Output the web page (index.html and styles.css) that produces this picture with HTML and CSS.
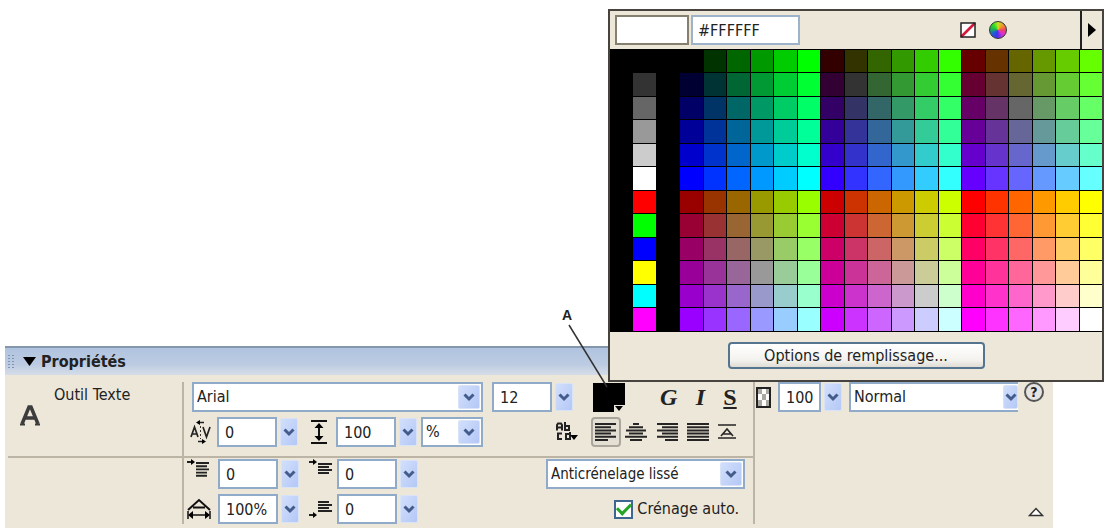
FILE: index.html
```html
<!DOCTYPE html>
<html lang="fr">
<head>
<meta charset="utf-8">
<title>Propriétés</title>
<link rel="stylesheet" href="styles.css">
</head>
<body>
<svg class="defs" width="0" height="0" aria-hidden="true">
  <symbol id="chev" viewBox="0 0 12 9"><path d="M1.5 1.5 6 6l4.500-4.500" fill="none" stroke="#435c8c" stroke-width="3"/></symbol>
</svg>
<main class="stage">
  <section class="panel" aria-label="Propriétés">
    <header class="panel-head">
      <span class="grip"></span>
      <svg width="13" height="9" viewBox="0 0 13 9" aria-hidden="true"><path d="M0 0h13L6.500 9z"/></svg>
      <h1>Propriétés</h1>
    </header>
    <div class="panel-body">
      <div class="tool">
        <svg width="20" height="22" viewBox="0 0 20 22" aria-hidden="true"><path d="M2 20 9 3h2l7 17M5 14h10" fill="none" stroke="#3c3c3c" stroke-width="3.500"/><path d="M0 20.500h5m10 0h5" stroke="#3c3c3c" stroke-width="2"/></svg>
        <span>Outil Texte</span>
      </div>
      <div class="tool-blank"></div>

      <div class="rows rows-top">
        <div class="row row-font">
          <div class="combo font"><select aria-label="Police"><option>Arial</option></select><span class="drop"><svg width="12" height="9"><use href="#chev"/></svg></span></div>
          <div class="field size"><input type="text" value="12" aria-label="Corps"><button class="drop" aria-label="Choisir le corps"><svg width="12" height="9"><use href="#chev"/></svg></button></div>
          <button class="swatch" aria-label="Couleur de remplissage"><svg width="32" height="29" viewBox="0 0 32 29"><path d="M0 0h32v29H0z"/><path d="M21 22h11v7H21z" fill="#ece6d8"/><path d="M22 23h8l-4 5z"/></svg></button>
          <div class="styles">
            <button class="bold" aria-label="Gras">G</button>
            <button class="italic" aria-label="Italique">I</button>
            <button class="under" aria-label="Souligné">S</button>
          </div>
        </div>
        <div class="row row-space">
          <svg class="ic" width="22" height="24" viewBox="0 0 22 24"><path d="M1 17 4.500 7 8 17M2 14h5M13 7l3.500 10L20 7" fill="none" stroke="#222" stroke-width="1.700"/><path d="M10.500 6v13" stroke="#333" stroke-dasharray="2 2"/><path d="M14 2.500H8M8 21.500h6" stroke="#222" stroke-width="1.300"/><path d="m6 2.500 4-2.500v5zM16 21.500l-4-2.500v5z"/></svg>
          <div class="field"><input type="text" value="0" aria-label="Crénage"><button class="drop" aria-label="Régler le crénage"><svg width="12" height="9"><use href="#chev"/></svg></button></div>
          <svg class="ic lead" width="18" height="24" viewBox="0 0 18 24"><path d="M1 1h16M1 23h16M9 5v14" stroke="#111" stroke-width="2"/><path d="m9 3 4.500 5h-9zM9 21l4.500-5h-9z"/></svg>
          <div class="field"><input type="text" value="100" aria-label="Interlignage"><button class="drop" aria-label="Régler l'interlignage"><svg width="12" height="9"><use href="#chev"/></svg></button></div>
          <div class="combo unit"><select aria-label="Unité"><option>%</option></select><span class="drop"><svg width="12" height="9"><use href="#chev"/></svg></span></div>
          <button class="tb orient" aria-label="Orientation du texte"><svg width="24" height="20" viewBox="0 0 24 20"><path d="M1 8.500V3l1-1.500h3L6 3v5.500M1 5.500h5M9 0v8h4V4H9M6 11.500H2V17h4M14 10v7h-4v-5h4" fill="none" stroke="#222" stroke-width="2"/><path d="M14 13h8l-4 5z"/></svg></button>
          <div class="aligns">
            <button class="tb on" aria-label="Aligner à gauche"><svg width="22" height="18" viewBox="0 0 22 18"><path d="M0 1h21M0 4.200h16M0 7.400h21M0 10.600h16M0 13.800h21M0 17h13" stroke="#252525" stroke-width="2"/></svg></button>
            <button class="tb" aria-label="Centrer"><svg width="22" height="18" viewBox="0 0 22 18"><path d="M8 1h6M4 4.200h14M1 7.400h20M4 10.600h14M0 13.800h22M5 17h12" stroke="#252525" stroke-width="2"/></svg></button>
            <button class="tb" aria-label="Aligner à droite"><svg width="22" height="18" viewBox="0 0 22 18"><path d="M1 1h21M6 4.200h16M1 7.400h21M6 10.600h16M1 13.800h21M9 17h13" stroke="#252525" stroke-width="2"/></svg></button>
            <button class="tb" aria-label="Justifier"><svg width="22" height="18" viewBox="0 0 22 18"><path d="M0 1h22M0 4.200h22M0 7.400h22M0 10.600h22M0 13.800h22M0 17h22" stroke="#252525" stroke-width="2"/></svg></button>
            <button class="tb" aria-label="Étirer"><svg width="18" height="16" viewBox="0 0 18 16"><path d="M0 1h18M0 14h18M3 12l6-7 6 7M5 10h8" fill="none" stroke="#252525" stroke-width="1.600"/></svg></button>
          </div>
        </div>
      </div>

      <div class="rows rows-bottom">
        <div class="row row-indent">
          <svg class="ic up" width="24" height="18" viewBox="0 0 24 18"><path d="M9 4h13M9 7.200h11M9 10.400h13M9 13.600h11M9 16.800h11M0 3h6" stroke="#222" stroke-width="1.900"/><path d="m8 3-4-3v6z"/></svg>
          <div class="field"><input type="text" value="0" aria-label="Retrait"><button class="drop" aria-label="Régler le retrait"><svg width="12" height="9"><use href="#chev"/></svg></button></div>
          <svg class="ic second up" width="24" height="18" viewBox="0 0 24 18"><path d="M9 5h14M9 8h11M9 11h14M9 14h11M0 3h6" stroke="#222" stroke-width="1.800"/><path d="m8 3-4-3v6z"/></svg>
          <div class="field"><input type="text" value="0" aria-label="Espace avant"><button class="drop" aria-label="Régler l'espace avant"><svg width="12" height="9"><use href="#chev"/></svg></button></div>
          <div class="combo smooth"><select aria-label="Anticrénelage"><option>Anticrénelage lissé</option></select><span class="drop"><svg width="12" height="9"><use href="#chev"/></svg></span></div>
        </div>
        <div class="row row-indent">
          <svg class="ic" width="24" height="22" viewBox="0 0 24 22"><path d="M1 12 12 2l11 10M6 9.500h12" fill="none" stroke="#111" stroke-width="2"/><path d="M1 13v8M23 13v8M4 17h16" stroke="#111" stroke-width="1.500"/><path d="m1 17 5-4v8zM23 17l-5-4v8z"/></svg>
          <div class="field"><input type="text" value="100%" aria-label="Échelle horizontale"><button class="drop" aria-label="Régler l'échelle"><svg width="12" height="9"><use href="#chev"/></svg></button></div>
          <svg class="ic second" width="24" height="18" viewBox="0 0 24 18"><path d="M9 2h11M9 5h14M9 8h11M9 11h14M0 15h6" stroke="#222" stroke-width="1.800"/><path d="m8 15-4-3v6z"/></svg>
          <div class="field"><input type="text" value="0" aria-label="Espace après"><button class="drop" aria-label="Régler l'espace après"><svg width="12" height="9"><use href="#chev"/></svg></button></div>
          <label class="check"><input type="checkbox" checked><span>Crénage auto.</span></label>
        </div>
      </div>

      <div class="blend">
        <div class="blend-row">
          <svg width="15" height="21" viewBox="0 0 15 21" aria-hidden="true"><path d="M1 1h13v19H1z" fill="#fff" stroke="#222" stroke-width="2"/><path d="M2 2h4v5H2zM10 2h3v5h-3zM6 7h4v6H6zM2 13h4v6H2zM10 13h3v6h-3z" fill="#aaa99f"/></svg>
          <div class="field opacity"><input type="text" value="100" aria-label="Opacité"><button class="drop" aria-label="Régler l'opacité"><svg width="12" height="9"><use href="#chev"/></svg></button></div>
          <div class="combo mode"><select aria-label="Mode de fusion"><option>Normal</option></select><span class="drop"><svg width="12" height="9"><use href="#chev"/></svg></span></div>
          <button class="help" aria-label="Aide">?</button>
        </div>
        <button class="fold" aria-label="Réduire"><svg width="16" height="10" viewBox="0 0 16 10"><path d="M1.500 8.500 8 1.500l6.500 7z" fill="#fff" stroke="#333" stroke-width="1.400"/></svg></button>
      </div>
    </div>
  </section>

  <div class="callout">
    <span>A</span>
    <svg width="46" height="66" viewBox="0 0 46 66" aria-hidden="true"><path d="M7 2 45 64" stroke="#333" stroke-width="1.500"/></svg>
  </div>

  <section class="picker" aria-label="Couleurs">
    <div class="picker-head">
      <span class="preview"></span>
      <input class="hex" type="text" value="#FFFFFF" aria-label="Valeur hexadécimale">
      <button class="none" aria-label="Sans couleur"><svg width="16" height="16" viewBox="0 0 16 16"><path d="M1 1h14v14H1z" fill="#fff"/><path d="m1 15L15 1" stroke="#d4183c" stroke-width="2.600"/><path d="M1 1h14v14H1z" fill="none" stroke="#222" stroke-width="1.500"/></svg></button>
      <button class="wheel" aria-label="Autres couleurs"></button>
      <button class="more" aria-label="Options de palette"><svg width="8" height="14" viewBox="0 0 8 14"><path d="M0 0v14l8-7z"/></svg></button>
    </div>
    <div class="palette" id="palette"></div>
    <div class="picker-foot"><button class="options">Options de remplissage...</button></div>
  </section>
</main>
<script src="palette.js"></script>
</body>
</html>
```
FILE: palette.js
```js
const steps = ["00", "33", "66", "99", "CC", "FF"];
const basics = ["000000", "333333", "666666", "999999", "CCCCCC", "FFFFFF",
  "FF0000", "00FF00", "0000FF", "FFFF00", "00FFFF", "FF00FF"];
const palette = document.getElementById("palette");

function addCell(hex) {
  const cell = document.createElement("button");
  cell.style.backgroundColor = "#" + hex;
  cell.setAttribute("aria-label", "#" + hex);
  palette.append(cell);
}

for (let row = 0; row < 12; row++) {
  addCell("000000");
  addCell(basics[row]);
  addCell("000000");
  for (let col = 0; col < 18; col++) {
    const red = Math.floor(col / 6) + (row < 6 ? 0 : 3);
    addCell(steps[red] + steps[col % 6] + steps[row % 6]);
  }
}
```
FILE: styles.css
```css
* { box-sizing: border-box; }

body {
  margin: 0;
  background: #fff;
  color: #222;
  font: 16px/20px "DejaVu Sans Condensed", "Noto Sans", sans-serif;
}

button, input, select { font: inherit; color: inherit; margin: 0; }
button { padding: 0; border: 0; background: none; }
svg { display: block; flex: none; }
.defs { position: absolute; }

.stage { position: relative; padding: 346px 56px 3px 5px; }

/* Properties panel */
.panel { background: #ede7d9; }

.panel-head {
  display: flex;
  align-items: center;
  height: 29px;
  padding: 0 2px;
  background: linear-gradient(#b0c3df, #bccbe2 60%, #d5dde8);
  border-top: 2px solid #8496ac;
}
.panel-head h1 { margin: 0 0 0 5px; font-size: 16px; line-height: 20px; font-weight: bold; }
.grip {
  width: 7px;
  height: 15px;
  margin-right: 9px;
  background: radial-gradient(circle, #8193b0 1px, transparent 1px) 0 0 / 4px 3px;
}

.panel-body {
  display: grid;
  grid-template-columns: 177px 573px 1fr;
  grid-template-rows: 83px 70px;
}
.tool, .rows-top { border-bottom: 2px solid #bcb5a6; }
.tool { display: flex; gap: 14px; margin-left: 3px; padding: 10px 0 0 12px; }
.tool svg { margin-top: 19px; }
.tool-blank { grid-area: 2 / 1; }
.rows-top { grid-area: 1 / 2; margin-top: 7px; }
.rows-bottom { grid-area: 2 / 2; margin-bottom: 4px; }
.rows { display: flex; flex-direction: column; gap: 5px; border-left: 2px solid #bcb5a6; border-right: 2px solid #bcb5a6; }
.row { display: flex; align-items: center; height: 30px; }
.row-font { padding-left: 8px; }
.row-space { padding-left: 6px; }
.row-indent { padding: 0 8px 0 3px; }
.rows-bottom { padding-top: 1px; }
.row-indent .ic { margin-right: 7px; }
.row-indent .ic.second { margin: 0 4px 0 10px; }
.ic.up { align-self: flex-start; }
.row-space .ic { margin-right: 5px; }
.row-space .ic.lead { margin: 0 8px 0 12px; }

.field { display: flex; gap: 3px; height: 30px; align-items: center; }
.field input {
  width: 60px;
  height: 30px;
  padding: 0 6px;
  background: #fff;
  border: 2px solid #8fabc9;
}
.drop {
  display: grid;
  place-items: center;
  width: 18px;
  height: 28px;
  background: linear-gradient(120deg, #d2dffc, #b4c8f6);
  border: 1px solid #d9e3f8;
  border-radius: 2px;
}

.combo { display: grid; height: 30px; }
.combo select {
  grid-area: 1 / 1;
  width: 100%;
  height: 30px;
  padding: 0 3px;
  appearance: none;
  background: #fff;
  border: 2px solid #8fabc9;
  border-radius: 0;
}
.combo .drop {
  grid-area: 1 / 1;
  place-self: center end;
  width: 22px;
  height: 24px;
  margin-right: 3px;
  pointer-events: none;
}
.font { width: 291px; margin-right: 9px; }
.unit { width: 62px; margin-left: 4px; }
.smooth { width: 199px; margin-left: auto; }
.smooth select { font-size: 15px; }

.swatch { margin-left: 20px; }
.styles {
  display: flex;
  align-items: center;
  gap: 16px;
  margin-left: 35px;
  font: bold 24px/26px "Liberation Serif", serif;
}
.styles .bold, .styles .italic { font-style: italic; }
.styles .italic { width: 14px; }
.styles .under { text-decoration: underline; }

.orient { margin-left: 73px; }
.aligns { display: flex; align-items: center; gap: 9px; margin-left: 11px; }
.tb { display: grid; place-items: center; }
.tb.on {
  width: 30px;
  height: 30px;
  margin-right: -5px;
  border: 2px solid #aaa69c;
  border-radius: 4px;
  background: #e4dfd3;
}

.check { display: flex; align-items: center; gap: 4px; margin-left: auto; padding-right: 6px; }
.check input {
  appearance: none;
  display: grid;
  place-items: center;
  width: 19px;
  height: 19px;
  background: #fff;
  border: 2px solid #3f6690;
}
.check input:checked::before {
  content: "";
  width: 11px;
  height: 6px;
  margin-bottom: 4px;
  border: solid #25a425;
  border-width: 0 0 3px 3px;
  transform: rotate(-45deg);
}

.blend {
  grid-area: 1 / 3 / 3 / 4;
  display: flex;
  flex-direction: column;
  justify-content: space-between;
  padding: 7px 9px 11px 1px;
}
.blend-row { display: flex; align-items: center; }
.opacity { margin: 0 7px; }
.opacity input { width: 43px; }
.mode { flex: 1; }
.mode select { border-right: 0; }
.mode .drop { width: 15px; margin-right: 0; }
.help {
  align-self: flex-start;
  width: 20px;
  height: 20px;
  margin-left: 6px;
  border: 2px solid #555;
  border-radius: 50%;
  background: #e6e4e2;
  font-size: 14px;
  line-height: 16px;
  font-weight: bold;
}
.fold { align-self: flex-end; }

/* Callout from the letter to the colour swatch */
.callout { position: absolute; left: 562px; top: 307px; font: bold 14px/16px "Liberation Sans", sans-serif; }

/* Colour picker pop-up */
.picker {
  position: absolute;
  top: 9px;
  right: 5px;
  width: 496px;
  background: #ede7d9;
  border: 2px solid #474440;
}
.picker-head { display: flex; align-items: center; height: 38px; padding: 0 0 0 5px; }
.preview { width: 74px; height: 30px; background: #fff; border: 2px solid #857f70; }
.hex { width: 109px; height: 30px; margin-left: 2px; padding: 0 5px; background: #fff; border: 2px solid #9db3c9; }
.none { margin-left: auto; }
.wheel {
  width: 18px;
  height: 18px;
  margin: 0 73px 0 13px;
  border: 1px solid #333;
  border-radius: 50%;
  background: conic-gradient(#c8e020, #f09030 50deg, #f04060 90deg, #e030d0 130deg, #4030f0 190deg, #2060d0 235deg, #20b050 280deg, #30e020 320deg, #c8e020);
}
.more { display: grid; place-items: center; align-self: stretch; width: 22px; border-left: 2px solid #222; }
.palette {
  display: grid;
  grid-template-columns: repeat(21, 1fr);
  grid-template-rows: repeat(12, 1fr);
  gap: 1px;
  aspect-ratio: 40 / 23;
  padding: 1px 0;
  background: #000;
}
.palette button { min-width: 0; min-height: 0; }
.picker-foot { display: grid; place-items: center; height: 48px; }
.options {
  width: 257px;
  height: 27px;
  border: 2px solid #54748f;
  border-radius: 4px;
  background: linear-gradient(#fff, #f3f2ee 70%, #dfdcd4);
}
```
